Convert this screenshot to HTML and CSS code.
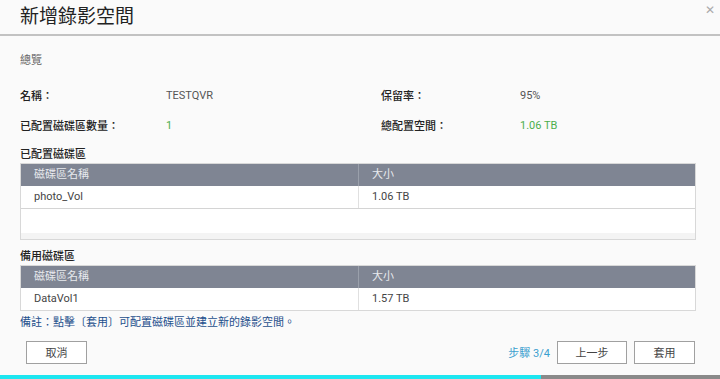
FILE: index.html
```html
<!DOCTYPE html>
<html lang="zh-TW">
<head>
  <meta charset="UTF-8">
  <title>新增錄影空間</title>
  <link rel="stylesheet" href="styles.css">
</head>
<body>
  <div class="dialog">
    <div class="header">
      <div class="title">新增錄影空間</div>
      <div class="close">&#x2715;</div>
    </div>
    <div class="content">
      <div class="section">總覽</div>
      <div class="info">
        <div class="label">名稱：</div>
        <div class="value">TESTQVR</div>
        <div class="label">保留率：</div>
        <div class="value">95%</div>
        <div class="label">已配置磁碟區數量：</div>
        <div class="value green">1</div>
        <div class="label">總配置空間：</div>
        <div class="value green">1.06 TB</div>
      </div>
      <div class="table-title">已配置磁碟區</div>
      <div class="table">
        <div class="row head">
          <div class="cell">磁碟區名稱</div>
          <div class="cell">大小</div>
        </div>
        <div class="row">
          <div class="cell">photo_Vol</div>
          <div class="cell">1.06 TB</div>
        </div>
        <div class="empty"></div>
      </div>
      <div class="table-title spare">備用磁碟區</div>
      <div class="table">
        <div class="row head">
          <div class="cell">磁碟區名稱</div>
          <div class="cell">大小</div>
        </div>
        <div class="row">
          <div class="cell">DataVol1</div>
          <div class="cell">1.57 TB</div>
        </div>
      </div>
      <div class="note">備註：點擊〔套用〕可配置磁碟區並建立新的錄影空間。</div>
    </div>
    <div class="footer">
      <button class="btn cancel">取消</button>
      <div class="step">步驟 3/4</div>
      <button class="btn">上一步</button>
      <button class="btn apply">套用</button>
    </div>
    <div class="progress"><div class="bar" style="width: 541px"></div></div>
  </div>
</body>
</html>
```

FILE: styles.css
```css
body {
  margin: 0;
  font-family: Roboto, "Noto Sans CJK TC", sans-serif;
  background: #fafafa;
  color: #222;
}
.dialog {
  width: 720px;
  height: 379px;
  display: flex;
  flex-direction: column;
  overflow: hidden;
}
.header {
  height: 34px;
  border-bottom: 2px solid #c2c2c2;
  display: flex;
  justify-content: space-between;
  align-items: flex-start;
  padding: 0 5px 0 20px;
}
.header .title {
  font-size: 19px;
  line-height: 34px;
  color: #222;
}
.header .close {
  font-size: 12px;
  color: #aaa;
  line-height: 18px;
  margin-top: 1px;
}
.content {
  padding: 0 24px 0 20px;
  flex: 1;
}
.section {
  font-size: 11px;
  color: #666;
  margin-top: 17px;
  line-height: 16px;
}
.info {
  display: grid;
  grid-template-columns: 146px 215px 139px 1fr;
  grid-auto-rows: 30px;
  margin-top: 11px;
  font-size: 11px;
  align-items: center;
}
.info .label {
  color: #222;
  font-weight: 500;
}
.info .value {
  color: #555;
}
.info .green {
  color: #4cae4c;
}
.table-title {
  font-size: 11px;
  line-height: 14px;
  color: #222;
  font-weight: 500;
  margin-top: 8px;
}
.table-title.spare {
  margin-top: 10px;
}
.table {
  margin-top: 1px;
  border: 1px solid #d8d8d8;
  background: #fff;
  font-size: 11px;
}
.row {
  display: grid;
  grid-template-columns: 337px 1fr;
  height: 22px;
  border-bottom: 1px solid #d4d4d4;
}
.row:last-child {
  border-bottom: none;
}
.row .cell {
  padding-left: 13px;
  line-height: 22px;
  color: #444;
}
.row .cell + .cell {
  border-left: 1px solid #e0e0e0;
}
.row.head {
  background: #7f8593;
  border-bottom: none;
}
.row.head .cell {
  color: #e8eaee;
  border-left-color: #9aa0ab;
}
.empty {
  height: 24px;
  border-bottom: 6px solid #f4f4f4;
}
.note {
  font-size: 11px;
  color: #1d4f8c;
  margin-top: 4px;
  line-height: 16px;
}
.footer {
  display: flex;
  align-items: center;
  padding: 0 25px 0 26px;
  height: 30px;
  margin-bottom: 8px;
}
.btn {
  width: 70px;
  height: 23px;
  border: 1px solid #a0a0a0;
  background: #fff;
  font-family: inherit;
  font-size: 11px;
  color: #444;
  padding: 0;
  margin-left: 7px;
}
.btn.cancel {
  width: 61px;
  margin-left: 0;
}
.btn.apply {
  width: 61px;
}
.step {
  margin-left: auto;
  font-size: 11px;
  color: #3a9fcf;
}
.progress {
  height: 4px;
  background: #8a8a8a;
}
.progress .bar {
  height: 100%;
  background: #1ee6f0;
}
```
